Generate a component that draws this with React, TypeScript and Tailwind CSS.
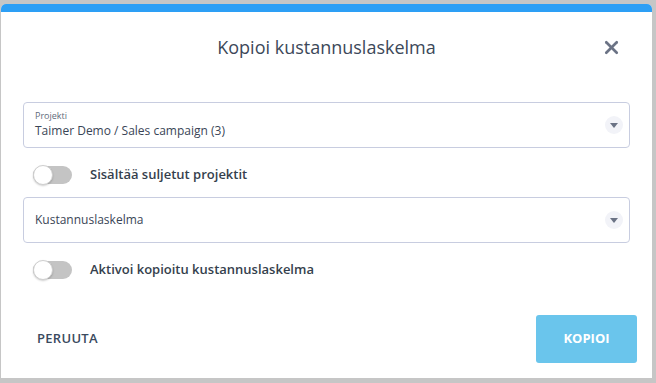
import { X } from 'lucide-react'

function Arrow() {
  return (
    <span className="flex h-[18px] w-[18px] items-center justify-center rounded-full bg-[#f2f3f8]">
      <svg width="8" height="5" viewBox="0 0 8 5">
        <path d="M0 0h8L4 5z" fill="#6b7385" />
      </svg>
    </span>
  )
}

function Toggle({ label }: { label: string }) {
  return (
    <div className="flex items-center">
      <div className="relative ml-[10px] h-[18px] w-[39px] rounded-full bg-[#c4c4c4]">
        <span className="absolute left-0 top-[-1px] h-[20px] w-[20px] rounded-full border border-[#cfcfcf] bg-white shadow-[0_1px_2px_rgba(0,0,0,0.2)]" />
      </div>
      <span className="ml-[18px] text-[13px] font-semibold text-[#353f4d]">{label}</span>
    </div>
  )
}

export default function App() {
  return (
    <div
      className="h-[383px] w-[656px] bg-[#c6c6c6] pt-[4px] pl-px"
      style={{ fontFamily: '"Open Sans", "Liberation Sans", sans-serif' }}
    >
      <div className="flex h-[374px] w-[651px] flex-col overflow-hidden rounded-t-[5px] bg-white">
        <div className="h-[8px] bg-[#2d9ff5]" />

        <div className="grid h-[70px] grid-cols-[1fr_auto_1fr] items-center">
          <div />
          <h1 className="text-[18px] text-[#3c4859]">Kopioi kustannuslaskelma</h1>
          <div className="flex justify-end pr-[30px]">
            <X size={21} strokeWidth={3} className="text-[#6b7385]" />
          </div>
        </div>

        <div className="px-[22px] pt-[20px]">
          <div className="flex h-[46px] items-center justify-between rounded-[4px] border border-[#c8cde0] pl-[11px] pr-[6px]">
            <div className="flex flex-col">
              <span className="text-[9px] leading-[12px] text-[#5f6b7a]">Projekti</span>
              <span className="text-[12px] leading-[18px] text-[#3a4556]">Taimer Demo / Sales campaign (3)</span>
            </div>
            <Arrow />
          </div>

          <div className="flex h-[49px] items-center pt-[5px]">
            <Toggle label="Sisältää suljetut projektit" />
          </div>

          <div className="flex h-[46px] items-center justify-between rounded-[4px] border border-[#c8cde0] pl-[11px] pr-[6px]">
            <span className="text-[12px] text-[#3a4556]">Kustannuslaskelma</span>
            <Arrow />
          </div>

          <div className="flex h-[54px] items-center">
            <Toggle label="Aktivoi kopioitu kustannuslaskelma" />
          </div>
        </div>

        <div className="mt-[18px] flex items-center justify-between pl-[36px] pr-[15px]">
          <button className="text-[13px] font-semibold tracking-[0.3px] text-[#3a4a5e]">PERUUTA</button>
          <button className="h-[48px] w-[101px] rounded-[3px] bg-[#6ac5ec] text-[13px] font-bold text-white">
            KOPIOI
          </button>
        </div>
      </div>
    </div>
  )
}
